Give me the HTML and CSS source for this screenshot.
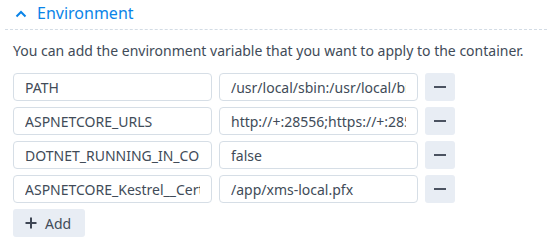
FILE: index.html
```html
<!DOCTYPE html>
<html lang="en">
<head>
    <meta charset="UTF-8">
    <title>Environment</title>
    <link rel="stylesheet" href="styles.css">
</head>
<body>
    <div class="section">
        <!-- Section header -->
        <div class="section-header">
            <svg class="chevron" width="12" height="8" viewBox="0 0 12 8">
                <path d="M1.5 6.5 L6 2 L10.5 6.5" fill="none" stroke="#0a84e8" stroke-width="2"/>
            </svg>
            <span class="section-title">Environment</span>
        </div>

        <div class="section-body">
            <p class="hint">You can add the environment variable that you want to apply to the container.</p>

            <div class="env-row">
                <input class="field" type="text" value="PATH">
                <input class="field" type="text" value="/usr/local/sbin:/usr/local/bin:/usr/sbin:/usr/bin:/sbin:/bin">
                <button class="remove-btn"><span class="minus"></span></button>
            </div>
            <div class="env-row">
                <input class="field" type="text" value="ASPNETCORE_URLS">
                <input class="field" type="text" value="http://+:28556;https://+:28557">
                <button class="remove-btn"><span class="minus"></span></button>
            </div>
            <div class="env-row">
                <input class="field" type="text" value="DOTNET_RUNNING_IN_CONTAINER">
                <input class="field" type="text" value="false">
                <button class="remove-btn"><span class="minus"></span></button>
            </div>
            <div class="env-row">
                <input class="field" type="text" value="ASPNETCORE_Kestrel__Certificates__Default__Path">
                <input class="field" type="text" value="/app/xms-local.pfx">
                <button class="remove-btn"><span class="minus"></span></button>
            </div>

            <button class="add-btn">
                <svg width="12" height="12" viewBox="0 0 12 12">
                    <path d="M6 0.5 V11.5 M0.5 6 H11.5" stroke="#3e4654" stroke-width="2"/>
                </svg>
                Add
            </button>
        </div>
    </div>
</body>
</html>
```

FILE: styles.css
```css
body {
    margin: 0;
    background: #ffffff;
    font-family: "Noto Sans", "Open Sans", sans-serif;
    color: #414b58;
}

.section {
    width: 547px;
}

/* Header */
.section-header {
    display: flex;
    align-items: center;
    height: 29px;
    margin-left: 5px;
    padding-left: 10px;
    border-bottom: 1px dashed #d3dce5;
}

.chevron {
    margin-right: 10px;
    margin-top: -1px;
}

.section-title {
    font-size: 16px;
    color: #0a84e8;
    margin-top: -3px;
}

/* Body */
.section-body {
    padding: 0 13px;
}

.hint {
    margin: 9px 0 11px;
    font-size: 14px;
    line-height: 23px;
    color: #414b58;
}

.env-row {
    display: flex;
    gap: 7px;
    margin-bottom: 6px;
}

.field {
    width: 199px;
    height: 28px;
    box-sizing: border-box;
    padding: 0 11px;
    border: 1px solid #d6dee6;
    border-radius: 4px;
    font-family: "Noto Sans", "Open Sans", sans-serif;
    font-size: 14px;
    color: #414b58;
    background: #ffffff;
    outline: none;
}

.remove-btn {
    width: 30px;
    height: 28px;
    border: none;
    border-radius: 3px;
    background: #e8edf4;
    display: flex;
    align-items: center;
    justify-content: center;
    padding: 0;
    cursor: pointer;
}

.minus {
    display: block;
    width: 12px;
    height: 2px;
    background: #4a5260;
}

.add-btn {
    display: flex;
    align-items: center;
    gap: 8px;
    height: 28px;
    margin-top: 1px;
    padding: 0 14px 0 12px;
    border: none;
    border-radius: 3px;
    background: #e8edf4;
    font-family: "Noto Sans", "Open Sans", sans-serif;
    font-size: 14px;
    color: #414b58;
    cursor: pointer;
}
```
